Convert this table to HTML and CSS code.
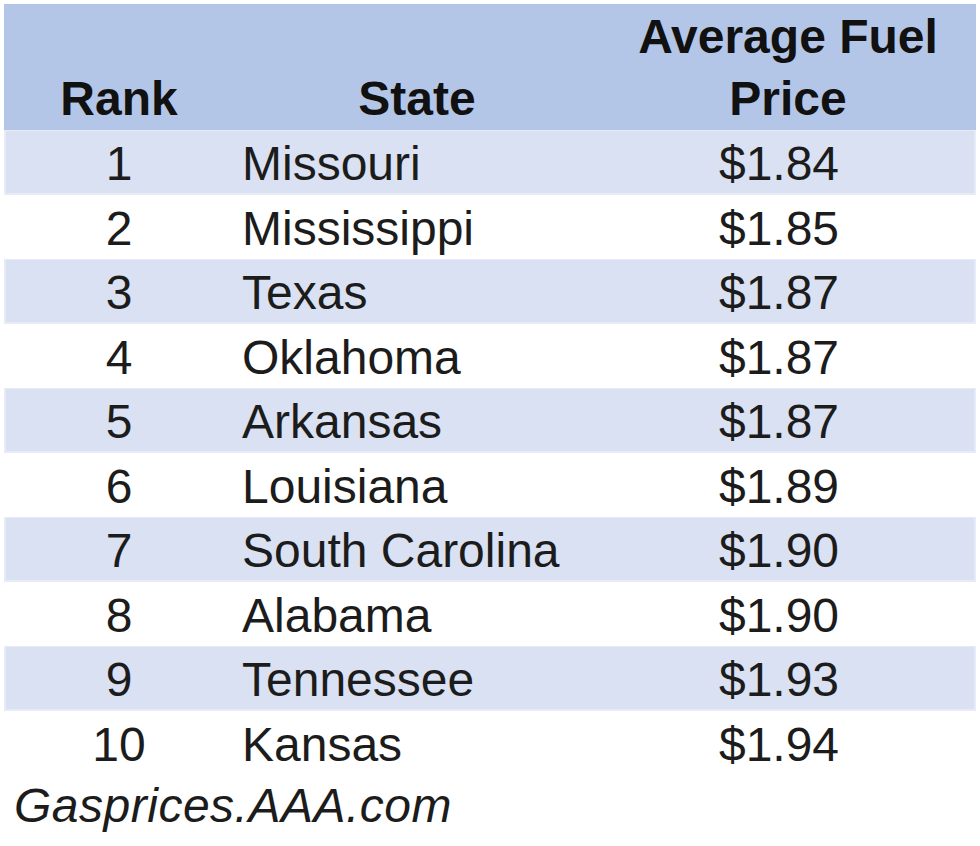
FILE: index.html
```html
<!DOCTYPE html>
<html lang="en">
<head>
    <meta charset="UTF-8">
    <title>Cheapest Fuel Prices by State</title>
    <link rel="stylesheet" href="styles.css">
</head>
<body>
    <div class="sheet">
        <table class="fuel-table">
            <colgroup>
                <col class="col-rank">
                <col class="col-state">
                <col class="col-price">
            </colgroup>
            <thead>
                <tr>
                    <th>Rank</th>
                    <th>State</th>
                    <th>Average Fuel<br>Price</th>
                </tr>
            </thead>
            <tbody>
                <tr class="band"><td>1</td><td>Missouri</td><td>$1.84</td></tr>
                <tr><td>2</td><td>Mississippi</td><td>$1.85</td></tr>
                <tr class="band"><td>3</td><td>Texas</td><td>$1.87</td></tr>
                <tr><td>4</td><td>Oklahoma</td><td>$1.87</td></tr>
                <tr class="band"><td>5</td><td>Arkansas</td><td>$1.87</td></tr>
                <tr><td>6</td><td>Louisiana</td><td>$1.89</td></tr>
                <tr class="band"><td>7</td><td>South Carolina</td><td>$1.90</td></tr>
                <tr><td>8</td><td>Alabama</td><td>$1.90</td></tr>
                <tr class="band"><td>9</td><td>Tennessee</td><td>$1.93</td></tr>
                <tr><td>10</td><td>Kansas</td><td>$1.94</td></tr>
            </tbody>
        </table>
        <div class="source">Gasprices.AAA.com</div>
    </div>
</body>
</html>
```

FILE: styles.css
```css
body {
    margin: 0;
    padding: 0;
    background-color: #ffffff;
    font-family: 'Liberation Sans', Arial, sans-serif;
    color: #1c1c1c;
}

.sheet {
    padding: 4px 4px 0 4px;
}

.fuel-table {
    width: 972px;
    border-collapse: collapse;
    table-layout: fixed;
    font-size: 48px;
}

.col-rank {
    width: 230px;
}

.col-state {
    width: 366px;
}

.col-price {
    width: 376px;
}

.fuel-table th {
    background-color: #b4c6e7;
    height: 126px;
    box-sizing: border-box;
    padding: 0;
    line-height: 62px;
    vertical-align: bottom;
    text-align: center;
    font-weight: bold;
    color: #111111;
}

.fuel-table td {
    height: 64.5px;
    padding: 7px 0 0 0;
    line-height: 53px;
    box-sizing: border-box;
    vertical-align: top;
    white-space: nowrap;
}

.fuel-table td:nth-child(1) {
    text-align: center;
}

.fuel-table td:nth-child(2) {
    text-align: left;
    padding-left: 8px;
}

.fuel-table td:nth-child(3) {
    text-align: center;
    padding-right: 18px;
}

.band td {
    background-color: #d9e1f2;
    box-shadow: inset 0 1px 0 #e6ebf7, inset 0 -2px 0 #e6ebf7;
}

.band td:first-child {
    box-shadow: inset 0 1px 0 #e6ebf7, inset 0 -2px 0 #e6ebf7, inset 2px 0 0 #e6ebf7;
}

.band td:last-child {
    box-shadow: inset 0 1px 0 #e6ebf7, inset 0 -2px 0 #e6ebf7, inset -2px 0 0 #e6ebf7;
}

.source {
    margin-top: 4px;
    padding-left: 10px;
    font-size: 48px;
    line-height: 53px;
    font-style: italic;
    letter-spacing: 0.5px;
}
```
